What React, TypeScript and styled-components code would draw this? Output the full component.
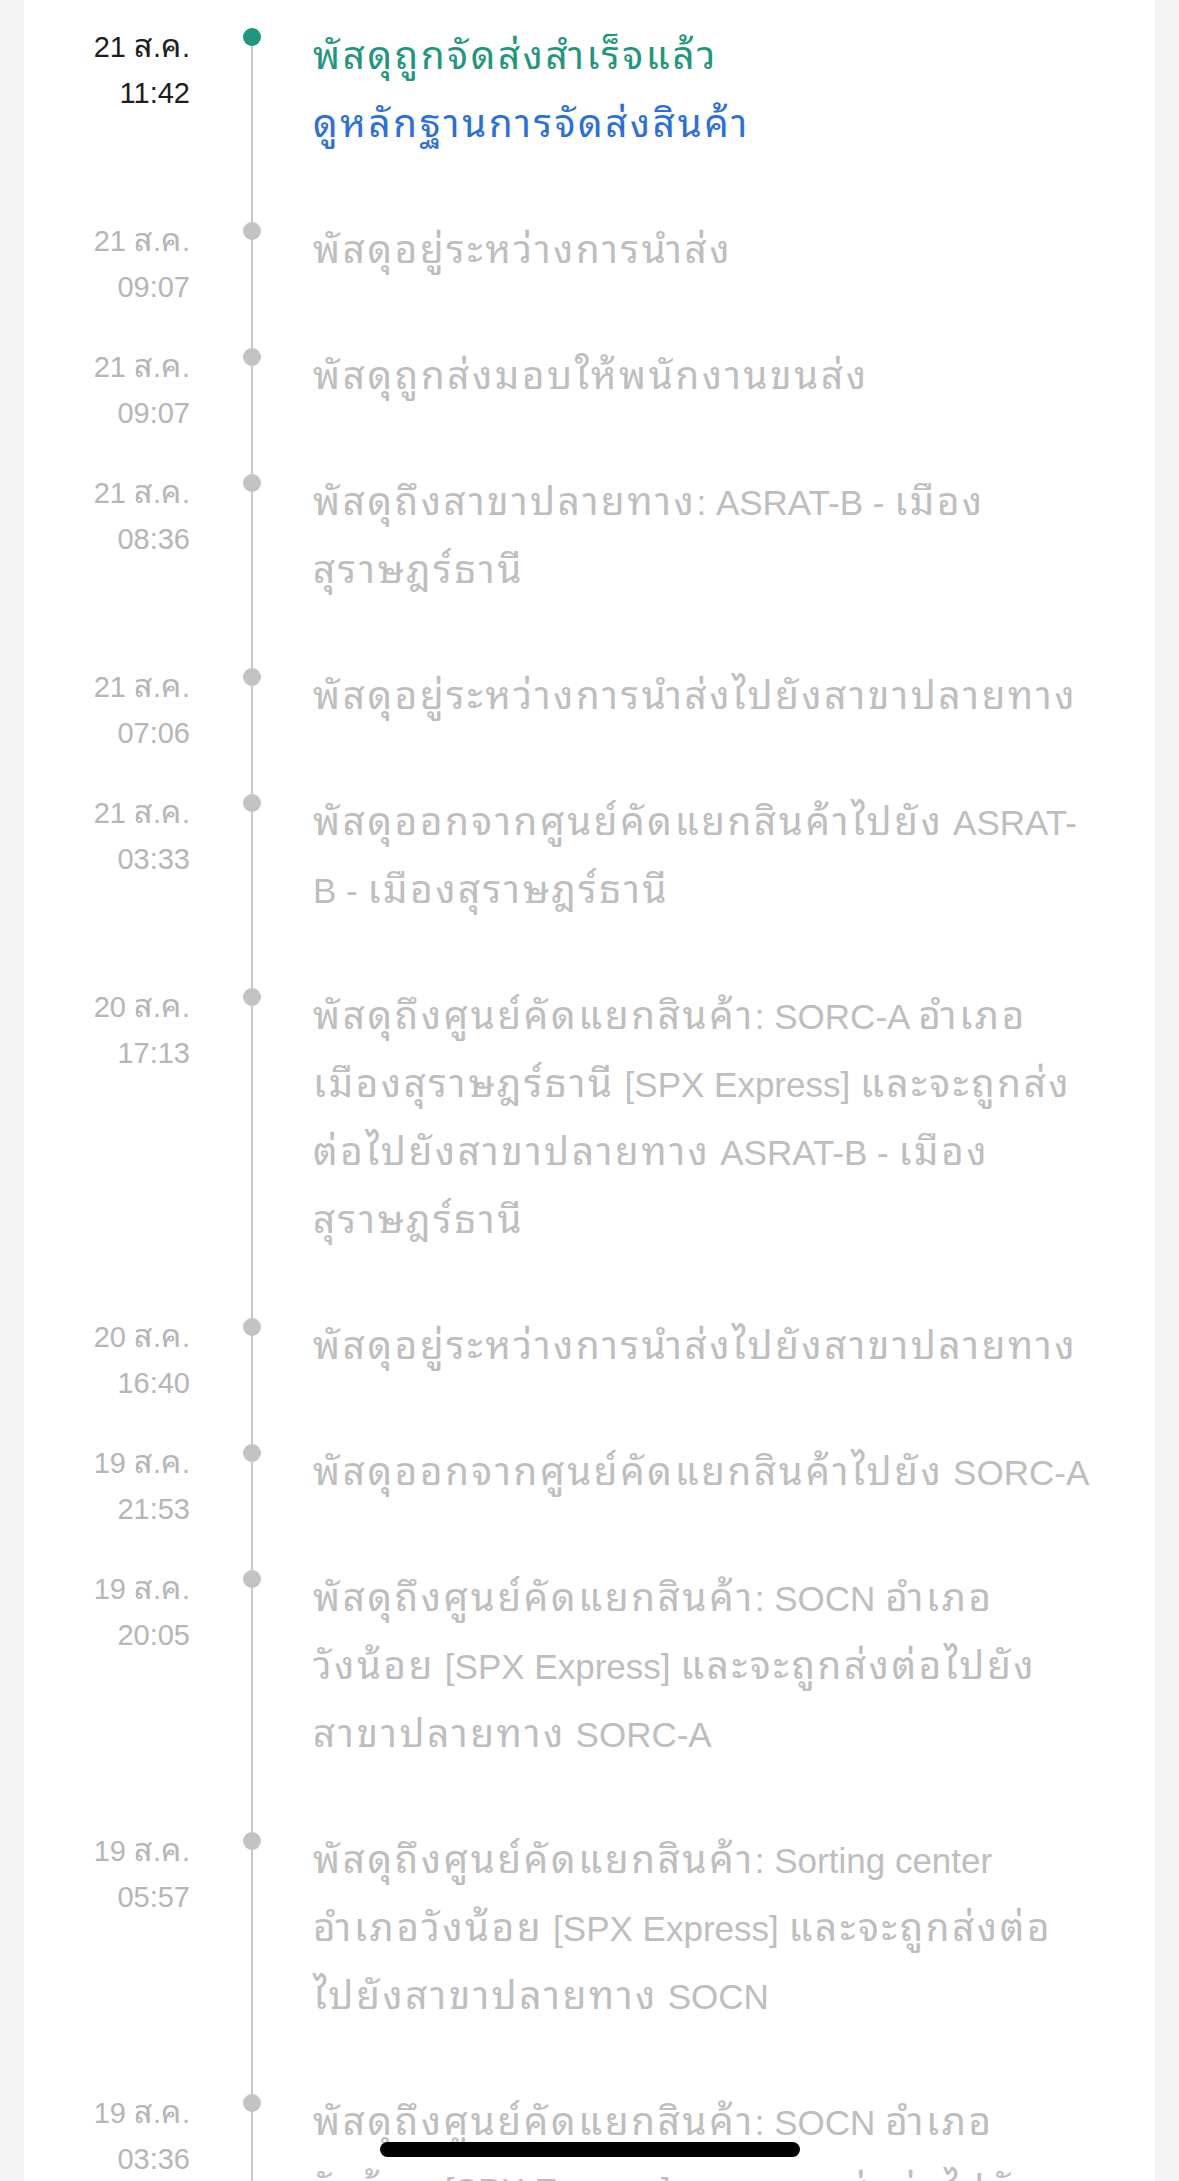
import React from "react";
import styled, { createGlobalStyle } from "styled-components";

const GlobalStyle = createGlobalStyle`
  html, body {
    margin: 0;
    padding: 0;
    background: #f4f4f4;
  }
  body {
    height: 2181px;
    overflow: hidden;
    font-family: "Liberation Sans", sans-serif;
    -webkit-font-smoothing: antialiased;
  }
`;

const Page = styled.div`
  position: relative;
  height: 2181px;
  overflow: hidden;
  background: #f4f4f4;
  padding: 0 24px;
`;

const Card = styled.div`
  background: #ffffff;
  min-height: 2181px;
  padding-top: 23px;
`;

const Row = styled.div`
  display: grid;
  grid-template-columns: 166px 123px 1fr;
`;

const DateCol = styled.div<{ $active?: boolean }>`
  text-align: right;
  font-size: 29px;
  line-height: 46px;
  padding-top: 1px;
  color: ${(p) => (p.$active ? "#1e1e1e" : "#b6b6b6")};
  white-space: nowrap;
`;

const Rail = styled.div`
  display: flex;
  flex-direction: column;
  align-items: center;
`;

const LineSeg = styled.div<{ $hidden?: boolean; $grow?: boolean }>`
  width: 2px;
  height: ${(p) => (p.$grow ? "auto" : "5px")};
  flex: ${(p) => (p.$grow ? "1 1 auto" : "0 0 auto")};
  background: ${(p) => (p.$hidden ? "transparent" : "#c8c8c8")};
`;

const Dot = styled.div<{ $active?: boolean }>`
  width: 18px;
  height: 18px;
  border-radius: 50%;
  flex: 0 0 auto;
  background: ${(p) => (p.$active ? "#1f977f" : "#c3c3c3")};
`;

const Body = styled.div`
  padding-bottom: 58px;
`;

const Line = styled.div<{ $tone: "green" | "blue" | "gray" }>`
  font-size: 35px;
  line-height: 68px;
  white-space: nowrap;
  color: ${(p) =>
    p.$tone === "green" ? "#1f977f" : p.$tone === "blue" ? "#2a70dc" : "#bebebe"};
`;

/* Thai script runs: the installed Thai face is narrower than the reference's */
const Thai = styled.span<{ $tight?: boolean }>`
  font-family: "Noto Sans Thai Looped", "Noto Sans Thai", sans-serif;
  font-size: ${(p) => (p.$tight ? "1.1em" : "1.1em")};
  letter-spacing: ${(p) => (p.$tight ? "0.02em" : "0.07em")};
  line-height: 1;
`;

const HomeIndicator = styled.div`
  position: absolute;
  left: 380px;
  top: 2142px;
  width: 420px;
  height: 15px;
  border-radius: 8px;
  background: #000;
`;

const thaiRe = /([\u0E00-\u0E7F]+)/;

function Mixed({ text, tight }: { text: string; tight?: boolean }) {
  const parts = text.split(thaiRe).filter((s) => s.length > 0);
  return (
    <>
      {parts.map((p, i) =>
        thaiRe.test(p) ? (
          <Thai key={i} $tight={tight}>
            {p}
          </Thai>
        ) : (
          <React.Fragment key={i}>{p}</React.Fragment>
        )
      )}
    </>
  );
}

type Item = {
  date: string;
  time: string;
  lines: string[];
  active?: boolean;
  link?: string;
};

const items: Item[] = [
  {
    date: "21 ส.ค.",
    time: "11:42",
    lines: ["พัสดุถูกจัดส่งสำเร็จแล้ว"],
    active: true,
    link: "ดูหลักฐานการจัดส่งสินค้า",
  },
  { date: "21 ส.ค.", time: "09:07", lines: ["พัสดุอยู่ระหว่างการนำส่ง"] },
  { date: "21 ส.ค.", time: "09:07", lines: ["พัสดุถูกส่งมอบให้พนักงานขนส่ง"] },
  {
    date: "21 ส.ค.",
    time: "08:36",
    lines: ["พัสดุถึงสาขาปลายทาง: ASRAT-B - เมือง", "สุราษฎร์ธานี"],
  },
  { date: "21 ส.ค.", time: "07:06", lines: ["พัสดุอยู่ระหว่างการนำส่งไปยังสาขาปลายทาง"] },
  {
    date: "21 ส.ค.",
    time: "03:33",
    lines: ["พัสดุออกจากศูนย์คัดแยกสินค้าไปยัง ASRAT-", "B - เมืองสุราษฎร์ธานี"],
  },
  {
    date: "20 ส.ค.",
    time: "17:13",
    lines: [
      "พัสดุถึงศูนย์คัดแยกสินค้า: SORC-A อำเภอ",
      "เมืองสุราษฎร์ธานี [SPX Express] และจะถูกส่ง",
      "ต่อไปยังสาขาปลายทาง ASRAT-B - เมือง",
      "สุราษฎร์ธานี",
    ],
  },
  { date: "20 ส.ค.", time: "16:40", lines: ["พัสดุอยู่ระหว่างการนำส่งไปยังสาขาปลายทาง"] },
  { date: "19 ส.ค.", time: "21:53", lines: ["พัสดุออกจากศูนย์คัดแยกสินค้าไปยัง SORC-A"] },
  {
    date: "19 ส.ค.",
    time: "20:05",
    lines: [
      "พัสดุถึงศูนย์คัดแยกสินค้า: SOCN อำเภอ",
      "วังน้อย [SPX Express] และจะถูกส่งต่อไปยัง",
      "สาขาปลายทาง SORC-A",
    ],
  },
  {
    date: "19 ส.ค.",
    time: "05:57",
    lines: [
      "พัสดุถึงศูนย์คัดแยกสินค้า: Sorting center",
      "อำเภอวังน้อย [SPX Express] และจะถูกส่งต่อ",
      "ไปยังสาขาปลายทาง SOCN",
    ],
  },
  {
    date: "19 ส.ค.",
    time: "03:36",
    lines: [
      "พัสดุถึงศูนย์คัดแยกสินค้า: SOCN อำเภอ",
      "วังน้อย [SPX Express] และจะถูกส่งต่อไปยัง",
      "สาขาปลายทาง SOCN",
    ],
  },
];

export default function App() {
  return (
    <>
      <GlobalStyle />
      <Page>
        <Card>
          {items.map((it, i) => (
            <Row key={i}>
              <DateCol $active={it.active}>
                <div>
                  <Mixed text={it.date} tight />
                </div>
                <div>{it.time}</div>
              </DateCol>
              <Rail>
                <LineSeg $hidden={i === 0} />
                <Dot $active={it.active} />
                <LineSeg $grow />
              </Rail>
              <Body>
                {it.lines.map((l, j) => (
                  <Line key={j} $tone={it.active ? "green" : "gray"}>
                    <Mixed text={l} />
                  </Line>
                ))}
                {it.link && (
                  <Line $tone="blue">
                    <Mixed text={it.link} />
                  </Line>
                )}
              </Body>
            </Row>
          ))}
        </Card>
        <HomeIndicator />
      </Page>
    </>
  );
}
